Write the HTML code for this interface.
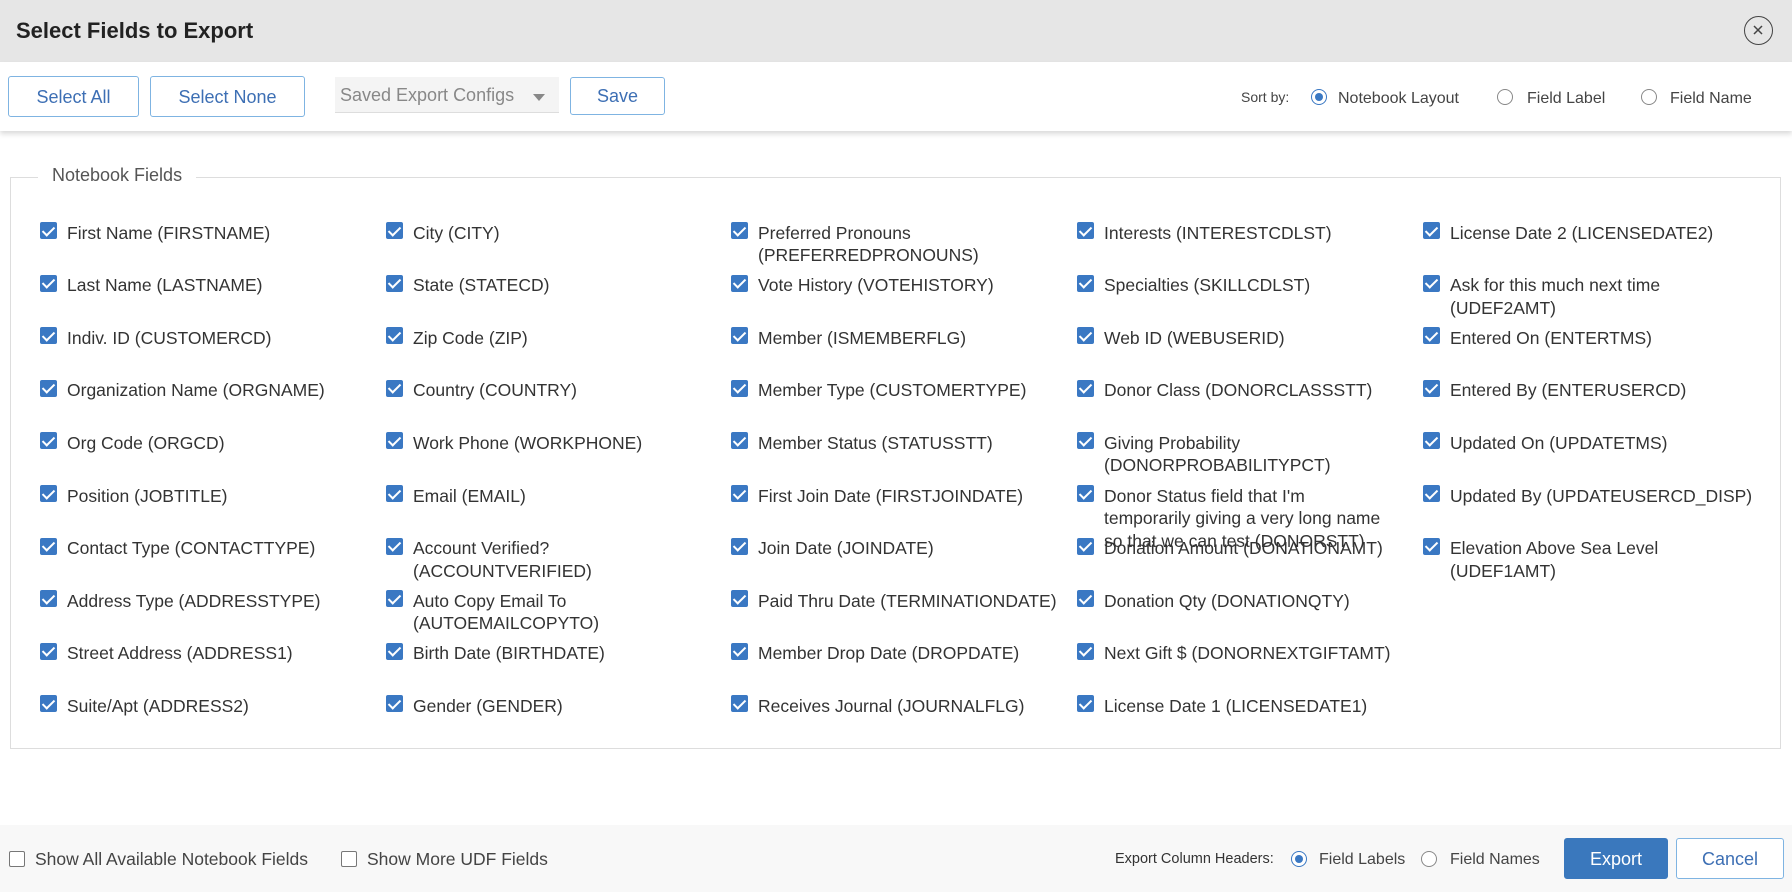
<!DOCTYPE html>
<html><head><meta charset="utf-8"><style>
*{box-sizing:border-box;margin:0;padding:0}
body{width:1792px;height:892px;overflow:hidden;background:#fff;font-family:"Liberation Sans",sans-serif;color:#333;position:relative}
.hdr{position:absolute;left:0;top:0;width:1792px;height:62px;background:#e6e6e6}
.hdr h1{position:absolute;left:16px;top:18px;font-size:22px;font-weight:bold;color:#222}
.close{position:absolute;left:1744px;top:16px;width:29px;height:29px;border:1.5px solid #444;border-radius:50%}
.tb{position:absolute;left:0;top:62px;width:1792px;height:69px;background:#fff;box-shadow:0 3px 5px rgba(0,0,0,.15)}
.btn{position:absolute;border:1px solid #7fb4e2;border-radius:3px;background:#fff;color:#3d6fb4;font-size:18px;text-align:center}
.sel{position:absolute;left:335px;top:77px;width:224px;height:36px;background:#f4f4f4;border-bottom:1px solid #ddd;color:#888;font-size:18px;padding:8px 0 0 5px}
.sel:after{content:"";position:absolute;right:14px;top:17px;border:6px solid transparent;border-top:7px solid #888}
.t{position:absolute;font-size:16px;color:#444;white-space:nowrap}
.rad{position:absolute;width:16px;height:16px;border:1.5px solid #888;border-radius:50%;background:#fff}
.rad.on{border-color:#3a78c3}
.rad.on:after{content:"";position:absolute;left:2.5px;top:2.5px;width:8px;height:8px;border-radius:50%;background:#3a78c3}
.fs{position:absolute;left:10px;top:177px;width:1771px;height:572px;border:1px solid #ddd}
.lg{position:absolute;left:38px;top:165px;background:#fff;padding:0 14px;font-size:18px;color:#555}
.it{position:absolute;font-size:17.5px;line-height:22.5px;color:#333;white-space:nowrap}
.cb{position:absolute;width:17px;height:17px;background:#3a78c3;border-radius:2px}
.cb:after{content:"";position:absolute;left:5px;top:1.5px;width:5px;height:10px;border:solid #fff;border-width:0 2.5px 2.5px 0;transform:rotate(45deg)}
.ft{position:absolute;left:0;top:825px;width:1792px;height:67px;background:#f8f8f8}
.ecb{position:absolute;width:16px;height:16px;border:1.5px solid #777;border-radius:2px;background:#fff}
</style></head><body>
<div class="hdr"><h1>Select Fields to Export</h1>
<div class="close"><svg width="26" height="26" viewBox="0 0 26 26" style="position:absolute;left:0;top:0"><path d="M9 9L17 17M17 9L9 17" stroke="#444" stroke-width="1.5"/></svg></div></div>
<div class="tb"></div>
<div class="btn" style="left:8px;top:76px;width:131px;height:41px;line-height:40px">Select All</div>
<div class="btn" style="left:150px;top:76px;width:155px;height:41px;line-height:40px">Select None</div>
<div class="sel">Saved Export Configs</div>
<div class="btn" style="left:570px;top:77px;width:95px;height:38px;line-height:36px">Save</div>
<div class="t" style="left:1241px;top:89px;font-size:14px">Sort by:</div>
<div class="rad on" style="left:1311px;top:89px"></div><div class="t" style="left:1338px;top:90px">Notebook Layout</div>
<div class="rad" style="left:1497px;top:89px"></div><div class="t" style="left:1527px;top:90px">Field Label</div>
<div class="rad" style="left:1641px;top:89px"></div><div class="t" style="left:1670px;top:90px">Field Name</div>
<div class="fs"></div><div class="lg">Notebook Fields</div>
<div id="f"></div>
<div class="ft"></div>
<div class="ecb" style="left:9px;top:851px"></div><div class="t" style="left:35px;top:849px;font-size:17.5px">Show All Available Notebook Fields</div>
<div class="ecb" style="left:341px;top:851px"></div><div class="t" style="left:367px;top:849px;font-size:17.5px">Show More UDF Fields</div>
<div class="t" style="left:1115px;top:851px;font-size:14.5px;color:#333">Export Column Headers:</div>
<div class="rad on" style="left:1291px;top:851px"></div><div class="t" style="left:1319px;top:851px">Field Labels</div>
<div class="rad" style="left:1421px;top:851px"></div><div class="t" style="left:1450px;top:851px">Field Names</div>
<div class="btn" style="left:1564px;top:838px;width:104px;height:41px;line-height:41px;background:#3a78bd;border-color:#3a78bd;color:#fff">Export</div>
<div class="btn" style="left:1676px;top:838px;width:108px;height:41px;line-height:40px">Cancel</div>
<script>
var cols=[[
"First Name (FIRSTNAME)","Last Name (LASTNAME)","Indiv. ID (CUSTOMERCD)","Organization Name (ORGNAME)","Org Code (ORGCD)","Position (JOBTITLE)","Contact Type (CONTACTTYPE)","Address Type (ADDRESSTYPE)","Street Address (ADDRESS1)","Suite/Apt (ADDRESS2)"],[
"City (CITY)","State (STATECD)","Zip Code (ZIP)","Country (COUNTRY)","Work Phone (WORKPHONE)","Email (EMAIL)","Account Verified?<br>(ACCOUNTVERIFIED)","Auto Copy Email To<br>(AUTOEMAILCOPYTO)","Birth Date (BIRTHDATE)","Gender (GENDER)"],[
"Preferred Pronouns<br>(PREFERREDPRONOUNS)","Vote History (VOTEHISTORY)","Member (ISMEMBERFLG)","Member Type (CUSTOMERTYPE)","Member Status (STATUSSTT)","First Join Date (FIRSTJOINDATE)","Join Date (JOINDATE)","Paid Thru Date (TERMINATIONDATE)","Member Drop Date (DROPDATE)","Receives Journal (JOURNALFLG)"],[
"Interests (INTERESTCDLST)","Specialties (SKILLCDLST)","Web ID (WEBUSERID)","Donor Class (DONORCLASSSTT)","Giving Probability<br>(DONORPROBABILITYPCT)","Donor Status field that I'm<br>temporarily giving a very long name<br>so that we can test (DONORSTT)","Donation Amount (DONATIONAMT)","Donation Qty (DONATIONQTY)","Next Gift $ (DONORNEXTGIFTAMT)","License Date 1 (LICENSEDATE1)"],[
"License Date 2 (LICENSEDATE2)","Ask for this much next time<br>(UDEF2AMT)","Entered On (ENTERTMS)","Entered By (ENTERUSERCD)","Updated On (UPDATETMS)","Updated By (UPDATEUSERCD_DISP)","Elevation Above Sea Level<br>(UDEF1AMT)"]];
var xs=[40,386,731,1077,1423],h="";
cols.forEach(function(c,i){c.forEach(function(s,j){var y=221+j*52.6;
h+='<div class="cb" style="left:'+xs[i]+'px;top:'+(y+1)+'px"></div><div class="it" style="left:'+(xs[i]+27)+'px;top:'+(y+0.5)+'px">'+s+'</div>';});});
document.getElementById("f").innerHTML=h;
</script>
</body></html>
